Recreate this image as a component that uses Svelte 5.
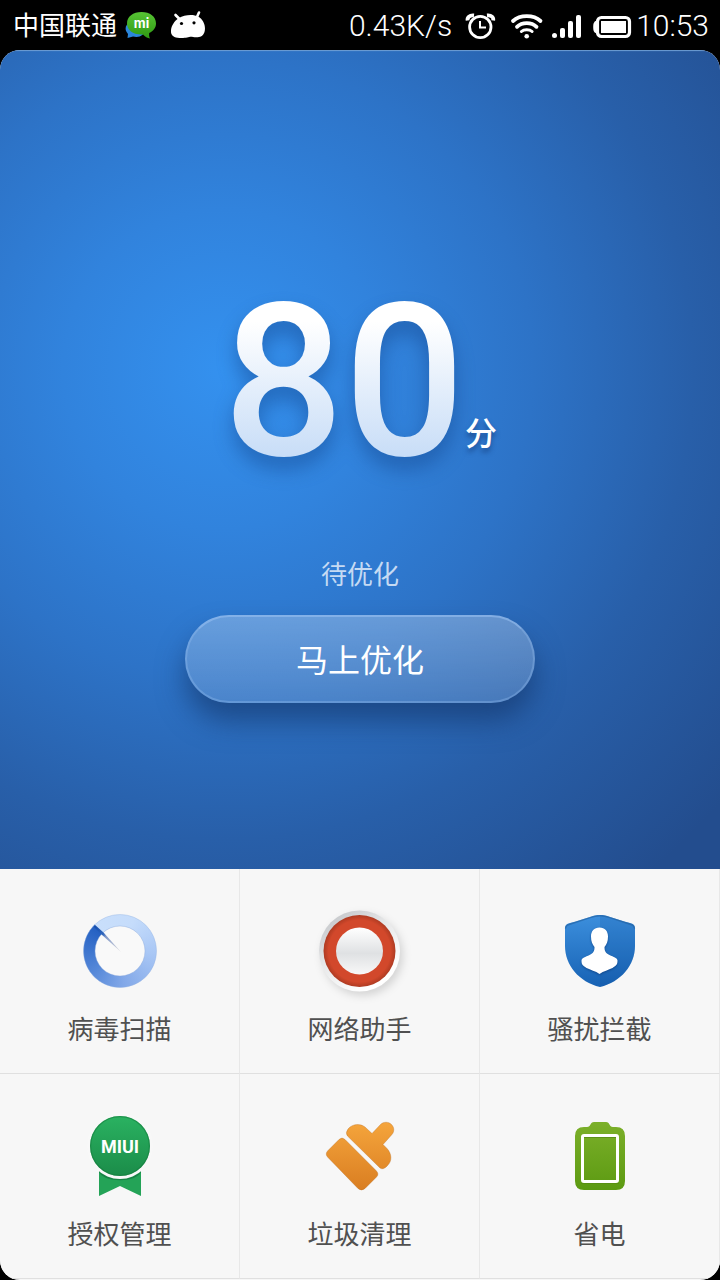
<script>
  const tools = [
    { id: 'scan', label: '病毒扫描' },
    { id: 'network', label: '网络助手' },
    { id: 'block', label: '骚扰拦截' },
    { id: 'permission', label: '授权管理' },
    { id: 'clean', label: '垃圾清理' },
    { id: 'power', label: '省电' }
  ];
</script>

<div class="screen">
  <header class="status">
    <div class="side">
      <span class="carrier">中国联通</span>
      <svg width="34" height="30" viewBox="0 0 34 30" aria-hidden="true">
        <defs>
          <linearGradient id="chat" x1="0" y1="0" x2="0" y2="1">
            <stop offset="0" stop-color="#56c234" />
            <stop offset="1" stop-color="#2f9a12" />
          </linearGradient>
        </defs>
        <path d="M6 12C0 14 -1 20 3 24L2.500 28L8 26.500C15 28 19 25 20 20Z" fill="#2b86dc" />
        <path d="M16.500 2C8 2 2 6.500 2 13.500C2 20 8 24.500 16 24.500L18 24.400C20 26.500 22.500 28 25 28.500C24 26.500 24 25 24.200 23C28.500 21 31 17.500 31 13.500C31 6.500 25 2 16.500 2Z" fill="url(#chat)" />
        <text x="16.500" y="18" text-anchor="middle" class="mi">mi</text>
      </svg>
      <svg class="droid" width="36" height="30" viewBox="0 0 36 30" aria-hidden="true">
        <path d="M4.500 5L9 9.500M28 2.500L25.500 8" stroke="#fff" stroke-width="2.600" stroke-linecap="round" />
        <path d="M8 8C13 4.500 23 4 27 6.500C33 9.500 35 17 33.500 22C32 27 27 28 22 27C18 26 16 28.500 8.500 28C2 27.600 -0.500 25 0 20C0.500 16 3 11 8 8Z" fill="#fff" />
        <circle cx="10.500" cy="13.500" r="1.600" fill="#000" />
        <circle cx="23" cy="12.800" r="1.600" fill="#000" />
      </svg>
    </div>
    <div class="side right">
      <span class="latin">0.43K/s</span>
      <div class="icons">
        <svg width="36" height="30" viewBox="0 0 36 30" fill="none" stroke="#fff" aria-hidden="true">
          <circle cx="20.300" cy="16" r="10.700" stroke-width="2.800" />
          <path d="M20 10V16.500H26" stroke-width="2" />
          <path d="M7.600 9.500C7 6.500 9.500 4 14 4.500M27 4.500C31.500 4 33.800 6.500 33.200 9.500" stroke-width="3.800" />
        </svg>
        <svg width="40" height="30" viewBox="0 0 40 30" fill="none" stroke="#fff" stroke-width="3.800" stroke-linecap="round" aria-hidden="true">
          <path d="M9 10C16 3.500 29.500 3.500 36.500 10" />
          <path d="M13 15.800C18 10.800 27.500 10.800 32.500 15.800" />
          <path d="M17.400 20.500C20 18 25.500 18 28.100 20.500" stroke-width="3" />
          <circle cx="22.700" cy="25.300" r="2.300" fill="#fff" stroke="none" />
        </svg>
        <svg width="32" height="30" viewBox="0 0 32 30" fill="#fff" aria-hidden="true">
          <circle cx="2.500" cy="24.500" r="2.500" />
          <rect x="8" y="17" width="5" height="10" rx="2" />
          <rect x="16" y="10" width="5" height="17" rx="2" />
          <rect x="24" y="4" width="5" height="23" rx="2" />
        </svg>
        <svg width="40" height="30" viewBox="0 0 40 30" aria-hidden="true">
          <rect x="5.500" y="6.500" width="32" height="19" rx="4" fill="none" stroke="#fff" stroke-width="3.200" />
          <path d="M6 9C2 10 1.200 12 1.200 16S2 22 6 23Z" fill="#fff" />
          <rect x="9" y="10" width="25" height="12" fill="#fff" />
        </svg>
      </div>
      <time class="latin">10:53</time>
    </div>
  </header>

  <main>
    <section class="hero">
      <div class="score"><span class="value">80</span><span class="unit">分</span></div>
      <p class="state">待优化</p>
      <button class="optimize" type="button">马上优化</button>
    </section>

    <nav class="tools">
      {#each tools as tool (tool.id)}
        <button class="tool" type="button">
          {#if tool.id === 'scan'}
            <span class="icon dial">
              <svg width="96" height="96" viewBox="0 0 96 96" aria-hidden="true">
                <defs>
                  <linearGradient id="needle" x1="22" y1="22" x2="48" y2="48" gradientUnits="userSpaceOnUse">
                    <stop offset="0" stop-color="#0f4aac" />
                    <stop offset="0.350" stop-color="#2f66bd" />
                    <stop offset="0.450" stop-color="#7f97c8" />
                    <stop offset="1" stop-color="#d8d8dc" />
                  </linearGradient>
                </defs>
                <circle cx="48" cy="48" r="36.500" fill="none" stroke="#8eafe0" stroke-opacity="0.350" />
                <circle cx="48" cy="48" r="25" fill="#f9f9f9" stroke="#89a8da" stroke-opacity="0.400" />
                <path d="M22.500 21.500L31.500 29.500L49 49L29.500 31.500L22 24Z" fill="url(#needle)" />
              </svg>
            </span>
          {:else}
            <svg class="icon" width="96" height="96" viewBox="0 0 96 96" aria-hidden="true">
              {#if tool.id === 'network'}
                <defs>
                  <linearGradient id="rim" x1="0.150" y1="0.100" x2="0.700" y2="0.900">
                    <stop offset="0" stop-color="#c8cacd" />
                    <stop offset="0.450" stop-color="#e8e9ea" />
                    <stop offset="1" stop-color="#fff" />
                  </linearGradient>
                  <radialGradient id="red">
                    <stop offset="0.860" stop-color="#d2482b" />
                    <stop offset="1" stop-color="#ae3b22" />
                  </radialGradient>
                  <linearGradient id="knob" x1="0" y1="0" x2="0" y2="1">
                    <stop offset="0" stop-color="#fff" />
                    <stop offset="0.550" stop-color="#dfe1e3" />
                    <stop offset="1" stop-color="#f8f8f8" />
                  </linearGradient>
                </defs>
                <circle class="rim" cx="47.500" cy="48" r="40.500" fill="url(#rim)" />
                <circle cx="47.500" cy="48" r="36" fill="url(#red)" />
                <circle cx="47.500" cy="48" r="23.500" fill="url(#knob)" />
              {:else if tool.id === 'block'}
                <defs>
                  <linearGradient id="shield" x1="0" y1="0" x2="0" y2="1">
                    <stop offset="0" stop-color="#3c8fdd" />
                    <stop offset="1" stop-color="#1762b4" />
                  </linearGradient>
                </defs>
                <path d="M48 12C52 12 54 12.500 58 14L73 18.800C79 20.500 83 20.500 83 25.500V43C83 62 69 79 48 84C27 79 13 62 13 43V25.500C13 20.500 17 20.500 23 18.800L38 14C42 12.500 44 12 48 12Z" fill="url(#shield)" />
                <path d="M48 12C52 12 54 12.500 58 14L73 18.800C79 20.500 83 20.500 83 25.500V43C83 62 69 79 48 84Z" fill="#0b4c98" fill-opacity="0.160" />
                <path d="M13.500 25.500C14 21.500 17 21.500 23 19.500L38 14.700C42 13.200 44 12.700 48 12.700S54 13.200 58 14.700L73 19.500C79 21.500 82 21.500 82.500 25.500" fill="none" stroke="#225f9e" stroke-opacity="0.600" stroke-width="1.400" />
                <path class="person" d="M47.500 24.500c5.500 0 8.500 3.800 8.500 9c0 5-1.500 8-3.500 10.500c0 4 1 6 5 8c4 2 8 3 8 5.500c0 4-1 5-5 7.500c-4 2-9 3-13 6c-4-3-9-4-13-6c-4-2.500-5-3.500-5-7.500c0-2.500 4-3.500 8-5.500c4-2 5-4 5-8c-2-2.500-3.500-5.500-3.500-10.500c0-5.200 3-9 8.500-9z" fill="#fff" />
              {:else if tool.id === 'permission'}
                <defs>
                  <linearGradient id="medal" x1="0" y1="0" x2="0" y2="1">
                    <stop offset="0" stop-color="#2ab261" />
                    <stop offset="1" stop-color="#1b8c49" />
                  </linearGradient>
                </defs>
                <path d="M27 63H69V88L48 78L27 88Z" fill="#24a357" />
                <path d="M27 64V63H69V64C64 75 32 75 27 64Z" fill="#178344" />
                <circle cx="48" cy="38" r="33" fill="#f8f8f8" />
                <circle cx="48" cy="38" r="30" fill="url(#medal)" />
                <circle cx="48" cy="38" r="29.400" fill="none" stroke="#147c3d" stroke-opacity="0.550" stroke-width="1.200" />
                <text x="48" y="45" text-anchor="middle" class="miui">MIUI</text>
              {:else if tool.id === 'clean'}
                <defs>
                  <linearGradient id="brush" x1="0" y1="14" x2="0" y2="83" gradientUnits="userSpaceOnUse">
                    <stop offset="0" stop-color="#f5a53c" />
                    <stop offset="1" stop-color="#d97d21" />
                  </linearGradient>
                </defs>
                <g fill="url(#brush)" stroke="#b8691c" stroke-opacity="0.350">
                  <path d="M16 42.500L27 31.500Q30 28.500 33 31.500L64 62.500Q67.500 66 64.500 69L53 80.500Q49.500 83.500 46 80.500L16 49.500Q12.500 46 16 42.500Z" />
                  <path d="M36 21C40 16 48 15 53 19L60 25.500L68.500 16.500C71.500 13.500 76.500 13.500 79.500 16.500C82.500 19.500 82.500 24 79.500 27L71 36.500L75 40.500C80 46 80 53 76 57Q71.500 62.500 68 60L35.500 28Q33 25 36 21Z" />
                </g>
              {:else}
                <defs>
                  <linearGradient id="cell" x1="0" y1="0" x2="0" y2="1">
                    <stop offset="0" stop-color="#7cb02a" />
                    <stop offset="1" stop-color="#5c9a12" />
                  </linearGradient>
                </defs>
                <path d="M32 19H35C39 19 38 14 42 14H54C58 14 57 19 61 19H64Q73 19 73 28V73Q73 82 64 82H32Q23 82 23 73V28Q23 19 32 19Z" fill="url(#cell)" />
                <rect x="30.500" y="27.500" width="35" height="46" rx="1.500" fill="none" stroke="#fff" stroke-width="3" />
                <path d="M32 29.500H64" stroke="#4d8010" stroke-opacity="0.600" />
                <path d="M29 75.500H67" stroke="#4d8010" stroke-opacity="0.400" />
              {/if}
            </svg>
          {/if}
          <span>{tool.label}</span>
        </button>
      {/each}
    </nav>
  </main>
</div>

<style>
  :global(body) {
    margin: 0;
    background: #000;
  }

  .screen {
    display: flex;
    flex-direction: column;
    min-height: 100vh;
    background: #000;
    color: #fff;
    font-family: 'Noto Sans CJK SC', sans-serif;
  }

  .status {
    display: flex;
    justify-content: space-between;
    align-items: center;
    height: 50px;
    padding: 0 11px 0 13px;
    box-sizing: border-box;
  }

  .side,
  .icons {
    display: flex;
    align-items: center;
    gap: 8px;
  }

  .droid {
    margin-left: 4px;
  }

  .right {
    gap: 4px;
    padding-top: 2px;
  }

  .icons {
    margin-left: 4px;
  }

  .carrier {
    padding-bottom: 2px;
    font-size: 26px;
    line-height: 48px;
  }

  .latin {
    font-family: Roboto, sans-serif;
    font-size: 30px;
    font-weight: 300;
    line-height: 48px;
  }

  .mi {
    font: 700 13px Inter, sans-serif;
    fill: #fff;
  }

  .miui {
    font: 700 18px Roboto, sans-serif;
    fill: #fff;
  }

  main {
    display: flex;
    flex: 1;
    flex-direction: column;
    overflow: hidden;
    border-radius: 20px;
    background: #f7f7f7;
  }

  .hero {
    display: flex;
    flex: 1;
    flex-direction: column;
    align-items: center;
    padding: 216px 20px 60px;
    background: radial-gradient(circle at 31% 39%, #3491ef 0, #3183dd 160px, #2d73c7 310px, #285fa9 470px, #234d8e 660px);
    box-shadow: inset 0 2px 1px -1px #6f9fd4;
  }

  .score {
    display: flex;
    align-items: flex-end;
  }

  .value {
    font-family: Roboto, sans-serif;
    font-size: 213px;
    font-weight: 500;
    line-height: 232px;
    color: transparent;
    background: linear-gradient(#fff 24%, #c6dcf7 84%);
    background-clip: text;
    filter: drop-shadow(0 12px 10px rgb(16 62 130 / 45%));
  }

  .unit {
    padding-bottom: 43px;
    font-size: 32px;
    font-weight: 500;
    line-height: 48px;
    text-shadow: 0 4px 5px rgb(16 52 110 / 60%);
  }

  .state {
    margin: 56px 0 23px;
    font-size: 26px;
    line-height: 38px;
    color: #c5daf3;
  }

  .optimize {
    width: 350px;
    max-width: 100%;
    height: 88px;
    padding: 0 0 2px;
    border: 2px solid rgb(150 190 240 / 35%);
    border-top-color: rgb(150 190 240 / 60%);
    border-radius: 44px;
    background: linear-gradient(rgb(255 255 255 / 28%), rgb(255 255 255 / 14%)) border-box;
    box-shadow: 0 18px 28px rgb(18 50 100 / 60%);
    color: #fff;
    font: 32px 'Noto Sans CJK SC', sans-serif;
  }

  .tools {
    display: grid;
    grid-template-columns: repeat(3, 1fr);
    padding-bottom: 1px;
  }

  .tool {
    display: flex;
    flex-direction: column;
    align-items: center;
    gap: 14px;
    padding: 34px 0 30px;
    border: 0 solid #e0e0e0;
    border-width: 0 1px 1px 0;
    border-right-color: #e8e8e8;
    background: #f7f7f7;
    color: #505050;
    font: 26px/30px 'Noto Sans CJK SC', sans-serif;
  }

  .icon {
    display: block;
    width: 96px;
    height: 96px;
    overflow: visible;
  }

  .dial {
    background: radial-gradient(circle, transparent 36px, #f7f7f7 37px),
      conic-gradient(from -46deg, #c9dffb, #c5dcfb 70deg, #a9c7f5 140deg, #82a8e8 220deg, #5487d8 280deg, #2460c2 360deg);
  }

  .rim {
    filter: drop-shadow(3px 4px 4px rgb(0 0 0 / 14%));
  }

  .person {
    filter: drop-shadow(0 1px 1px rgb(8 50 110 / 60%));
  }
</style>
